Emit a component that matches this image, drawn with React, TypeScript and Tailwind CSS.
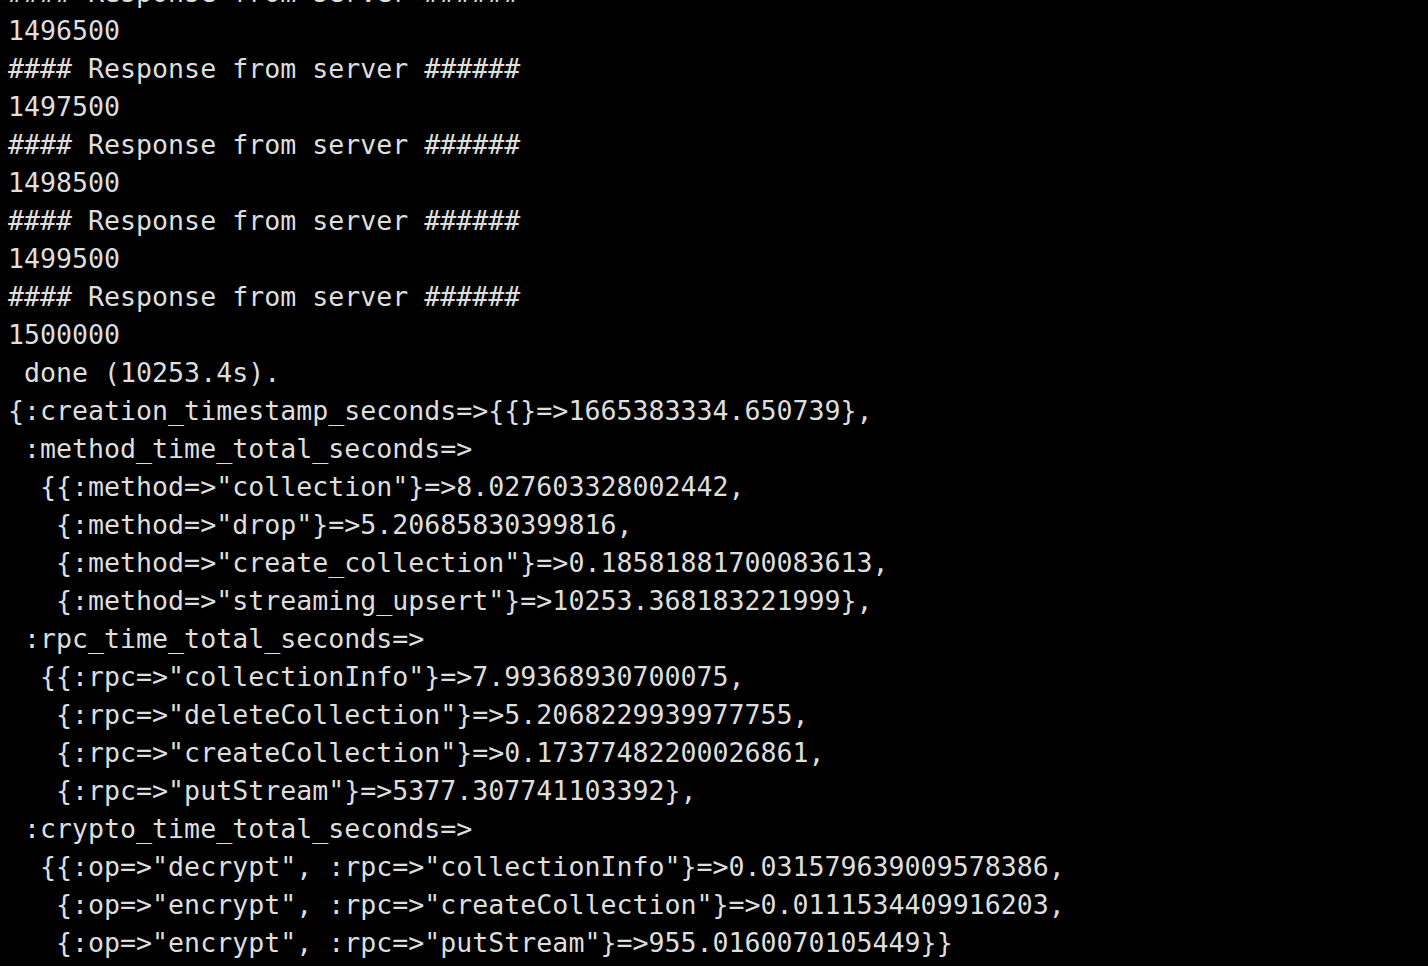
const lines = [
  "#### Response from server ######",
  "1496500",
  "#### Response from server ######",
  "1497500",
  "#### Response from server ######",
  "1498500",
  "#### Response from server ######",
  "1499500",
  "#### Response from server ######",
  "1500000",
  " done (10253.4s).",
  "{:creation_timestamp_seconds=>{{}=>1665383334.650739},",
  " :method_time_total_seconds=>",
  '  {{:method=>"collection"}=>8.027603328002442,',
  '   {:method=>"drop"}=>5.20685830399816,',
  '   {:method=>"create_collection"}=>0.18581881700083613,',
  '   {:method=>"streaming_upsert"}=>10253.368183221999},',
  " :rpc_time_total_seconds=>",
  '  {{:rpc=>"collectionInfo"}=>7.99368930700075,',
  '   {:rpc=>"deleteCollection"}=>5.2068229939977755,',
  '   {:rpc=>"createCollection"}=>0.17377482200026861,',
  '   {:rpc=>"putStream"}=>5377.307741103392},',
  " :crypto_time_total_seconds=>",
  '  {{:op=>"decrypt", :rpc=>"collectionInfo"}=>0.031579639009578386,',
  '   {:op=>"encrypt", :rpc=>"createCollection"}=>0.0111534409916203,',
  '   {:op=>"encrypt", :rpc=>"putStream"}=>955.0160070105449}}',
];

export default function App() {
  return (
    <div className="w-full h-[966px] overflow-hidden bg-black">
      {/* terminal output */}
      <pre className="-mt-[26px] pl-2 font-['DejaVu_Sans_Mono',monospace] text-[26.6px] leading-[38px] text-[#dedede] whitespace-pre">
        {lines.map((line, i) => (
          <div key={i}>{line === "" ? " " : line}</div>
        ))}
      </pre>
    </div>
  );
}
